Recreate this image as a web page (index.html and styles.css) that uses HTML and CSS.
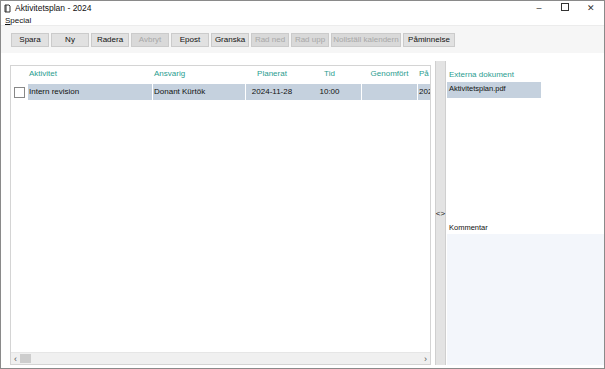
FILE: index.html
```html
<!DOCTYPE html>
<html lang="sv">
<head>
    <meta charset="UTF-8">
    <title>Aktivitetsplan - 2024</title>
    <link rel="stylesheet" href="styles.css">
</head>
<body>
    <div class="window">
        <div class="titlebar">
            <svg class="app-icon" width="7" height="9" viewBox="0 0 7 9">
                <path d="M1 1h4l1 1v6H1z" fill="#fff" stroke="#333" stroke-width="1"/>
                <path d="M2 1v7" stroke="#333" stroke-width="1"/>
            </svg>
            <span class="title">Aktivitetsplan - 2024</span>
            <div class="controls">
                <span class="ctl">&#8211;</span>
                <span class="ctl"><span class="max"></span></span>
                <span class="ctl">&#10005;</span>
            </div>
        </div>
        <div class="menubar"><span><u>S</u>pecial</span></div>
        <div class="toolbar">
            <button class="btn">Spara</button>
            <button class="btn">Ny</button>
            <button class="btn">Radera</button>
            <button class="btn disabled">Avbryt</button>
            <button class="btn">Epost</button>
            <button class="btn">Granska</button>
            <button class="btn disabled">Rad ned</button>
            <button class="btn disabled">Rad upp</button>
            <button class="btn disabled wide">Nollställ kalendern</button>
            <button class="btn wide2">Påminnelse</button>
        </div>
        <div class="main">
            <div class="grid">
                <div class="grid-body">
                    <div class="row head">
                        <span class="c chk"></span>
                        <span class="c akt">Aktivitet</span>
                        <span class="c ans">Ansvarig</span>
                        <span class="c pla center">Planerat</span>
                        <span class="c tid center">Tid</span>
                        <span class="c gen center">Genomfört</span>
                        <span class="c pa">På</span>
                    </div>
                    <div class="row sel">
                        <span class="c chk"><span class="box"></span></span>
                        <span class="c akt">Intern revision</span>
                        <span class="c ans">Donant Kürtök</span>
                        <span class="c pla center">2024-11-28</span>
                        <span class="c tid center">10:00</span>
                        <span class="c gen center"></span>
                        <span class="c pa">202</span>
                    </div>
                </div>
                <div class="hscroll">
                    <span class="arrow">&lsaquo;</span>
                    <span class="thumb"></span>
                    <span class="track"></span>
                    <span class="arrow">&rsaquo;</span>
                </div>
            </div>
            <div class="splitter"><span>&lt;&gt;</span></div>
            <div class="side">
                <div class="docs">
                    <div class="side-head">Externa dokument</div>
                    <div class="doc sel">Aktivitetsplan.pdf</div>
                </div>
                <div class="label">Kommentar</div>
                <div class="comment"></div>
            </div>
        </div>
    </div>
</body>
</html>
```

FILE: styles.css
```css
body {
    margin: 0;
    font-family: "Liberation Sans", Arial, sans-serif;
    font-size: 8px;
    color: #111;
    background: #fff;
}
.window {
    width: 605px;
    height: 369px;
    box-sizing: border-box;
    border: 1px solid #8a8a8a;
    display: flex;
    flex-direction: column;
    background: #fff;
}
.titlebar {
    height: 14px;
    display: flex;
    align-items: center;
    padding-left: 3px;
}
.app-icon { margin-right: 4px; }
.title { font-size: 8.5px; }
.controls {
    margin-left: auto;
    display: flex;
}
.ctl {
    width: 26px;
    text-align: center;
    font-size: 9px;
    color: #333;
}
.max {
    display: inline-block;
    width: 6px;
    height: 6px;
    border: 1px solid #333;
}
.menubar {
    height: 10px;
    padding-left: 4px;
    display: flex;
    align-items: center;
    border-bottom: 1px solid #ececec;
}
.toolbar {
    height: 27px;
    display: flex;
    align-items: center;
    gap: 2px;
    padding: 0 10px;
    background: #f6f6f6;
}
.btn {
    width: 38px;
    height: 14px;
    padding: 0;
    margin: 0;
    font-family: inherit;
    font-size: 8px;
    color: #111;
    background: #e1e1e1;
    border: 1px solid #cbcbcb;
}
.btn.disabled { color: #a8a8a8; background: #d9d9d9; }
.btn.wide { width: 70px; }
.btn.wide2 { width: 52px; }
.main {
    flex: 1;
    display: flex;
    padding: 8px 0 3px 9px;
    background: #fff;
}
.grid {
    width: 419px;
    margin-top: 4px;
    border: 1px solid #d4d4d4;
    display: flex;
    flex-direction: column;
}
.grid-body { flex: 1; }
.row {
    display: flex;
    height: 16px;
    align-items: center;
}
.row.head { height: 14px; color: #2a9d8f; margin-bottom: 4px; }
.row.sel .c:not(.chk) { background: #c5d1de; height: 16px; line-height: 16px; }
.c {
    box-sizing: border-box;
    padding-left: 1px;
    white-space: nowrap;
    overflow: hidden;
    border-right: 1px solid #fff;
}
.center { text-align: center; padding-left: 0; }
.chk { width: 17px; display: flex; justify-content: center; }
.box {
    width: 9px;
    height: 9px;
    border: 1px solid #888;
    background: #fff;
}
.akt { width: 125px; }
.ans { width: 93px; }
.pla { width: 52px; border-right: none; }
.tid { width: 64px; }
.gen { width: 56px; }
.pa { width: 12px; padding-left: 1px; border-right: none; }
.hscroll {
    height: 11px;
    display: flex;
    align-items: center;
    background: #f0f0f0;
    border-top: 1px solid #e6e6e6;
}
.arrow { width: 9px; text-align: center; font-size: 9px; color: #555; }
.thumb { width: 11px; height: 9px; background: #cdcdcd; }
.track { flex: 1; }
.splitter {
    width: 9px;
    margin-left: 4px;
    background: #e3e3e3;
    border-left: 1px solid #cfcfcf;
    border-right: 1px solid #cfcfcf;
    display: flex;
    align-items: center;
    justify-content: center;
    font-size: 8px;
}
.side {
    flex: 1;
    display: flex;
    flex-direction: column;
    padding-left: 1px;
}
.docs { height: 151px; padding-top: 9px; }
.side-head {
    color: #2a9d8f;
    padding-left: 2px;
    height: 12px;
}
.doc {
    width: 92px;
    height: 16px;
    line-height: 13px;
    padding-left: 2px;
    font-size: 7.5px;
}
.doc.sel { background: #c5d1de; }
.label { height: 13px; line-height: 13px; padding-left: 2px; font-size: 7.5px; }
.comment {
    flex: 1;
    background: #f3f6fb;
}
```
